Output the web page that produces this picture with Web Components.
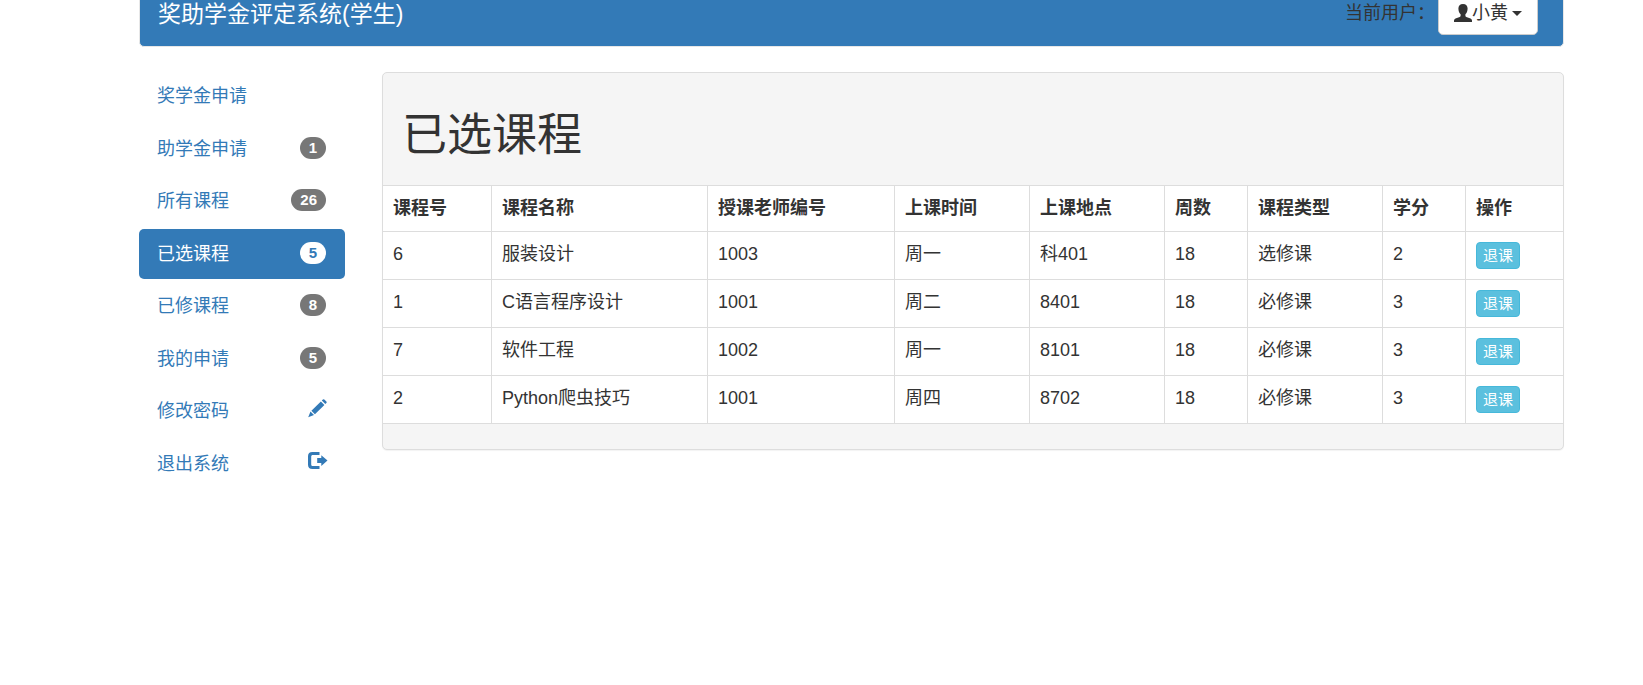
<!DOCTYPE html>
<html lang="zh-CN">
<head>
<meta charset="UTF-8">
<meta name="viewport" content="width=device-width, initial-scale=1">
<title>奖助学金评定系统(学生)</title>
<style>
  body {
    margin: 0;
    background-color: #fff;
    color: #333;
    font-family: "Liberation Sans", "Noto Sans CJK SC", sans-serif;
    font-size: 18px;
    line-height: 25px;
  }
</style>
</head>
<body>
<student-app>
  <app-navbar slot="navbar" user="小黄">奖助学金评定系统(学生)</app-navbar>
  <side-menu slot="menu">
    <menu-item>奖学金申请</menu-item>
    <menu-item badge="1">助学金申请</menu-item>
    <menu-item badge="26">所有课程</menu-item>
    <menu-item badge="5" active>已选课程</menu-item>
    <menu-item badge="8">已修课程</menu-item>
    <menu-item badge="5">我的申请</menu-item>
    <menu-item icon="pencil">修改密码</menu-item>
    <menu-item icon="log-out">退出系统</menu-item>
  </side-menu>
  <info-panel>
    <span slot="title">已选课程</span>
    <course-table></course-table>
  </info-panel>
</student-app>

<script>
const ICONS = {
  user: '<path d="M9 0C6 0 4.400 1.800 4.400 4.600c0 2.600.9 4.500 2.200 5.700v1.500c0 .5-.3.800-.9 1.100L1.500 14.600C.5 15.100 0 15.800 0 16.800V18h18v-1.200c0-1-.5-1.700-1.500-2.200l-4.200-1.700c-.6-.3-.9-.6-.9-1.100v-1.500c1.300-1.200 2.200-3.100 2.200-5.700C13.600 1.800 12 0 9 0z"/>',
  pencil: '<path d="M14.900.5a1 1 0 0 1 1.400 0l2.100 2.100a1 1 0 0 1 0 1.400l-1.100 1.100-3.500-3.500zM12.900 2.500l3.500 3.500-9.500 9.300-3.500-3.500zM2.500 12.600l3.500 3.500L.2 18.200z"/>',
  'log-out': '<path d="M11.500 0v3H5C3.700 3 3.200 3.500 3.200 4.800v7.400C3.200 13.500 3.700 14 5 14h6.500v3H4.400C1.500 17 0 15.500 0 12.700V4.300C0 1.500 1.500 0 4.400 0zM13.300 3.200l6.200 5.300-6.200 5.500V11H9.200V6h4.100z"/>'
};

class GlyphIcon extends HTMLElement {
  constructor() {
    super();
    this.attachShadow({ mode: "open" });
  }

  connectedCallback() {
    this.shadowRoot.innerHTML = `
    <style>
      :host {
        display: inline-block;
        width: 18px;
        height: 18px;
      }

      svg {
        display: block;
        overflow: visible;
        fill: currentColor;
      }
    </style>
    <svg width="18" height="18" viewBox="0 0 18 18" aria-hidden="true">${ICONS[this.getAttribute("name")]}</svg>
    `;
  }
}

class StudentApp extends HTMLElement {
  constructor() {
    super();
    this.attachShadow({ mode: "open" });
  }

  connectedCallback() {
    this.shadowRoot.innerHTML = `
    <style>
      :host {
        display: block;
        padding: 0 79px 0 139px;
      }

      .row {
        display: flex;
        align-items: flex-start;
        gap: 37px;
        padding-top: 24px;
      }

      main {
        flex: 1;
        min-width: 0;
        padding-top: 1px;
      }
    </style>
    <slot name="navbar"></slot>
    <div class="row">
      <slot name="menu"></slot>
      <main><slot></slot></main>
    </div>
    `;
  }
}

class AppNavbar extends HTMLElement {
  constructor() {
    super();
    this.attachShadow({ mode: "open" });
  }

  connectedCallback() {
    this.shadowRoot.innerHTML = `
    <style>
      /* the bar sits partly above the top edge, as when scrolled */
      :host {
        display: block;
        margin-top: -18px;
      }

      header {
        display: flex;
        align-items: center;
        justify-content: space-between;
        height: 63px;
        padding: 0 25px 0 18px;
        border: 1px solid #e7e7e7;
        border-radius: 5px;
        background-color: #337ab7;
      }

      .brand {
        color: #fff;
        font-size: 23px;
        text-decoration: none;
      }

      .account {
        display: flex;
        align-items: center;
        gap: 3px;
        padding-bottom: 2px;
      }

      button {
        display: flex;
        align-items: center;
        height: 43px;
        padding: 0 15px;
        border: 1px solid #ccc;
        border-radius: 5px;
        background-color: #fff;
        color: #333;
        font: inherit;
        cursor: pointer;
      }

      button glyph-icon {
        margin-bottom: 2px;
      }

      .caret {
        margin-left: 4px;
        border-top: 5px solid;
        border-right: 5px solid transparent;
        border-left: 5px solid transparent;
      }
    </style>
    <header>
      <a class="brand" href="#"><slot></slot></a>
      <div class="account">
        <span id="who">当前用户：</span>
        <button type="button" id="name" aria-haspopup="true" aria-labelledby="who name">
          <glyph-icon name="user"></glyph-icon><span>${this.getAttribute("user")}</span><span class="caret"></span>
        </button>
      </div>
    </header>
    `;
  }
}

class SideMenu extends HTMLElement {
  constructor() {
    super();
    this.attachShadow({ mode: "open" });
  }

  connectedCallback() {
    this.shadowRoot.innerHTML = `
    <style>
      :host {
        display: block;
        flex: 0 0 206px;
      }

      ::slotted(menu-item:nth-child(odd)) {
        margin-bottom: 3px;
      }

      ::slotted(menu-item:nth-child(even)) {
        margin-bottom: 2px;
      }
    </style>
    <nav><slot></slot></nav>
    `;
  }
}

class MenuItem extends HTMLElement {
  constructor() {
    super();
    this.attachShadow({ mode: "open" });
  }

  connectedCallback() {
    const badge = this.getAttribute("badge");
    const icon = this.getAttribute("icon");
    this.shadowRoot.innerHTML = `
    <style>
      :host {
        display: block;
      }

      a {
        display: flex;
        align-items: center;
        justify-content: space-between;
        height: 50px;
        padding: 0 19px 0 18px;
        border-radius: 5px;
        color: #337ab7;
        text-decoration: none;
      }

      .badge {
        margin-bottom: 2px;
        padding: 3px 9px;
        border-radius: 12px;
        background-color: #777;
        color: #fff;
        font-size: 15px;
        font-weight: bold;
        line-height: 16px;
      }

      glyph-icon {
        margin-bottom: 6px;
      }

      :host([active]) a {
        background-color: #337ab7;
        color: #fff;
      }

      :host([active]) .badge {
        background-color: #fff;
        color: #337ab7;
      }
    </style>
    <a href="#"${this.hasAttribute("active") ? ' aria-current="page"' : ""}>
      <span><slot></slot></span>
      ${badge ? `<span class="badge">${badge}</span>` : ""}
      ${icon ? `<glyph-icon name="${icon}"></glyph-icon>` : ""}
    </a>
    `;
  }
}

class InfoPanel extends HTMLElement {
  constructor() {
    super();
    this.attachShadow({ mode: "open" });
  }

  connectedCallback() {
    this.shadowRoot.innerHTML = `
    <style>
      :host {
        display: block;
        border: 1px solid #ddd;
        border-radius: 5px;
        background-color: #f5f5f5;
        box-shadow: 0 1px 1px rgba(0, 0, 0, 0.05);
      }

      .heading {
        padding: 13px 19px 0;
      }

      h1 {
        margin: 25px 0 24px;
        font-size: 45px;
        font-weight: 400;
        line-height: 50px;
      }

      .footer {
        height: 25px;
      }
    </style>
    <section>
      <div class="heading"><h1><slot name="title"></slot></h1></div>
      <slot></slot>
      <div class="footer"></div>
    </section>
    `;
  }
}

class CourseTable extends HTMLElement {
  constructor() {
    super();
    this.attachShadow({ mode: "open" });
    this.columns = [
      ["课程号", 109], ["课程名称", 216], ["授课老师编号", 187],
      ["上课时间", 135], ["上课地点", 135], ["周数", 83],
      ["课程类型", 135], ["学分", 83], ["操作", 97]
    ];
    this.courses = [
      ["6", "服装设计", "1003", "周一", "科401", "18", "选修课", "2"],
      ["1", "C语言程序设计", "1001", "周二", "8401", "18", "必修课", "3"],
      ["7", "软件工程", "1002", "周一", "8101", "18", "必修课", "3"],
      ["2", "Python爬虫技巧", "1001", "周四", "8702", "18", "必修课", "3"]
    ];
  }

  connectedCallback() {
    this.render();
  }

  render() {
    const total = this.columns.reduce((sum, c) => sum + c[1], 0);
    this.shadowRoot.innerHTML = `
    <style>
      :host {
        display: block;
      }

      table {
        width: 100%;
        table-layout: fixed;
        border-spacing: 0;
        border-bottom: 1px solid #ddd;
        background-color: #fff;
      }

      th, td {
        padding: 10px;
        border-top: 1px solid #ddd;
        border-right: 1px solid #ddd;
        text-align: left;
        vertical-align: top;
      }

      th:last-child, td:last-child {
        border-right: 0;
      }

      button {
        display: block;
        padding: 0 6px;
        border: 1px solid #46b8da;
        border-radius: 4px;
        background-color: #5bc0de;
        color: #fff;
        font-family: inherit;
        font-size: 15px;
        line-height: 25px;
        cursor: pointer;
      }
    </style>
    <table>
      <colgroup>${this.columns.map(c => `<col style="width: ${c[1] / total * 100}%">`).join("")}</colgroup>
      <thead>
        <tr>${this.columns.map(c => `<th scope="col">${c[0]}</th>`).join("")}</tr>
      </thead>
      <tbody>
        ${this.courses.map(course => `
        <tr>
          ${course.map(value => `<td>${value}</td>`).join("")}
          <td><button type="button">退课</button></td>
        </tr>`).join("")}
      </tbody>
    </table>
    `;
  }
}

customElements.define("glyph-icon", GlyphIcon);
customElements.define("student-app", StudentApp);
customElements.define("app-navbar", AppNavbar);
customElements.define("side-menu", SideMenu);
customElements.define("menu-item", MenuItem);
customElements.define("info-panel", InfoPanel);
customElements.define("course-table", CourseTable);
</script>
</body>
</html>
